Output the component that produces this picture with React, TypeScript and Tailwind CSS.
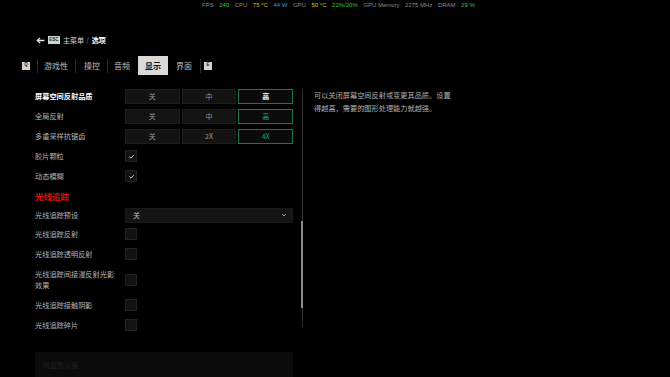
import React from "react";

const CJK = "font-['Noto_Sans_CJK_SC','Noto_Sans',sans-serif]";

type Seg = { options: string[]; active: number; activeText: string };

function Segmented({ options, active, activeText }: Seg) {
  return (
    <div className="flex gap-[2px] w-[168px]">
      {options.map((o, i) =>
        i === active ? (
          <div
            key={o}
            className={`flex-1 h-[15px] flex items-center justify-center border border-[#12785a] bg-[#0b0b0b] text-[7px] ${activeText}`}
          >
            {o}
          </div>
        ) : (
          <div
            key={o}
            className="flex-1 h-[15px] flex items-center justify-center border border-[#1e1e1e] bg-[#131313] text-[7px] text-[#969696]"
          >
            {o}
          </div>
        )
      )}
    </div>
  );
}

function Checkbox({ checked }: { checked?: boolean }) {
  return (
    <div className="w-[12px] h-[12px] border border-[#222] bg-[#121212] flex items-center justify-center">
      {checked && (
        <svg viewBox="0 0 10 10" className="w-[7px] h-[7px]">
          <path d="M2 5.2 4.3 7.3 8.2 3" stroke="#dcdcdc" strokeWidth="1.3" fill="none" />
        </svg>
      )}
    </div>
  );
}

function Row({ label, bright, children, h = "h-[20px]" }: { label: React.ReactNode; bright?: boolean; children: React.ReactNode; h?: string }) {
  return (
    <div className={`flex items-center ${h}`}>
      <div className={`w-[90px] text-[7.2px] leading-[11px] ${bright ? "text-white font-bold" : "text-[#b4b4b4]"}`}>{label}</div>
      {children}
    </div>
  );
}

function Badge({ children, w = "w-[8px]" }: { children: React.ReactNode; w?: string }) {
  return (
    <div className={`${w} h-[8px] bg-[#d2d2d2] text-[#222] text-[4.5px] font-bold flex items-center justify-center font-['Liberation_Sans',sans-serif]`}>
      {children}
    </div>
  );
}

const stats: { t: string; c: string }[] = [
  { t: "FPS", c: "text-[#8a8a8a]" },
  { t: "240", c: "text-[#3fc23a]" },
  { t: "CPU", c: "text-[#8a8a8a]" },
  { t: "75 °C", c: "text-[#d8c21a]" },
  { t: "44 W", c: "text-[#3a9be0]" },
  { t: "GPU", c: "text-[#8a8a8a]" },
  { t: "50 °C", c: "text-[#d8c21a]" },
  { t: "22%/20%", c: "text-[#3fc23a]" },
  { t: "GPU Memory", c: "text-[#8a8a8a]" },
  { t: "2275 MHz", c: "text-[#8a8a8a]" },
  { t: "DRAM", c: "text-[#8a8a8a]" },
  { t: "29 %", c: "text-[#3fc23a]" },
];

export default function App() {
  return (
    <div className={`w-[670px] h-[377px] bg-black overflow-hidden ${CJK}`}>
      {/* Overlay stats */}
      <div className="h-[10px] pl-[202px] flex items-center gap-[5.5px] text-[6px] font-['Liberation_Sans',sans-serif]">
        {stats.map((s) => (
          <span key={s.t} className={s.c}>
            {s.t}
          </span>
        ))}
      </div>

      {/* Breadcrumb */}
      <div className="mt-[25px] h-[10px] pl-[36px] flex items-center">
        <svg viewBox="0 0 10 8" className="w-[9px] h-[7px]">
          <path d="M9.5 4H1.5M4.5 1 1.3 4l3.2 3" stroke="#e6e6e6" strokeWidth="1.5" fill="none" />
        </svg>
        <div className="ml-[3px]">
          <Badge w="w-[12px]">ESC</Badge>
        </div>
        <span className="ml-[3px] text-[7px] text-[#d8d8d8]">主菜单</span>
        <span className="ml-[2px] text-[7px] text-[#8a8a8a]">/</span>
        <span className="ml-[3px] text-[7px] text-white font-bold">选项</span>
      </div>

      {/* Tabs */}
      <div className="mt-[11px] h-[19px] pl-[22px] flex items-center text-[8px] text-[#bcbcbc]">
        <Badge>Q</Badge>
        <div className="ml-[7px] w-px h-[14px] bg-[#2a2a2a]" />
        <span className="ml-[6px]">游戏性</span>
        <div className="ml-[7px] w-px h-[14px] bg-[#2a2a2a]" />
        <span className="ml-[8px]">操控</span>
        <div className="ml-[7px] w-px h-[14px] bg-[#2a2a2a]" />
        <span className="ml-[6px]">音频</span>
        <div className="ml-[8px] h-[19px] w-[30px] bg-[#d9d9d9] text-[#111] font-bold flex items-center justify-center">显示</div>
        <span className="ml-[8px]">界面</span>
        <div className="ml-[8px] w-px h-[14px] bg-[#2a2a2a]" />
        <div className="ml-[3px]">
          <Badge>E</Badge>
        </div>
      </div>

      {/* Content */}
      <div className="mt-[11px] flex">
        <div className="ml-[35px] w-[258px] flex flex-col">
          <Row label="屏幕空间反射品质" bright>
            <Segmented options={["关", "中", "高"]} active={2} activeText="text-white font-bold" />
          </Row>
          <Row label="全局反射">
            <Segmented options={["关", "中", "高"]} active={2} activeText="text-[#16a37a]" />
          </Row>
          <Row label="多重采样抗锯齿">
            <Segmented options={["关", "2X", "4X"]} active={2} activeText="text-[#16a37a]" />
          </Row>
          <Row label="胶片颗粒">
            <Checkbox checked />
          </Row>
          <Row label="动态模糊">
            <Checkbox checked />
          </Row>
          <div className="h-[20px] flex items-center text-[8.5px] font-bold text-[#e3100f]">光线追踪</div>
          <Row label="光线追踪预设" h="h-[18px]">
            <div className="w-[168px] h-[15px] bg-[#141414] border border-[#1a1a1a] flex items-center justify-between pl-[7px] pr-[5px] text-[7px] text-[#bdbdbd]">
              <span>关</span>
              <svg viewBox="0 0 10 10" className="w-[6px] h-[6px]">
                <path d="M2 3.5 5 6.5 8 3.5" stroke="#cfcfcf" strokeWidth="1.4" fill="none" />
              </svg>
            </div>
          </Row>
          <Row label="光线追踪反射">
            <Checkbox />
          </Row>
          <Row label="光线追踪透明反射">
            <Checkbox />
          </Row>
          <Row
            label={
              <>
                光线追踪间接漫反射光影
                <br />
                效果
              </>
            }
            h="h-[31px]"
          >
            <Checkbox />
          </Row>
          <Row label="光线追踪接触阴影">
            <Checkbox />
          </Row>
          <Row label="光线追踪碎片">
            <Checkbox />
          </Row>
          <div className="mt-[17px] h-[30px] bg-[#0b0b0b] pl-[8px] pt-[8px] text-[7px] text-[#1f1f1f]">恢复默认值</div>
        </div>

        {/* Scrollbar */}
        <div className="ml-[8px] mt-[4px] w-[2px] h-[237px] flex justify-center">
          <div className="w-px h-full bg-[#303030] flex flex-col items-center">
            <div className="mt-[131px] w-[2px] shrink-0 h-[87px] bg-[#8c8c8c]" />
          </div>
        </div>

        {/* Description */}
        <div className="ml-[11px] mt-[3px] text-[7.2px] leading-[13px] text-[#b0b0b0]">
          可以关闭屏幕空间反射或变更其品质。设置
          <br />
          得越高，需要的图形处理能力就越强。
        </div>
      </div>
    </div>
  );
}
